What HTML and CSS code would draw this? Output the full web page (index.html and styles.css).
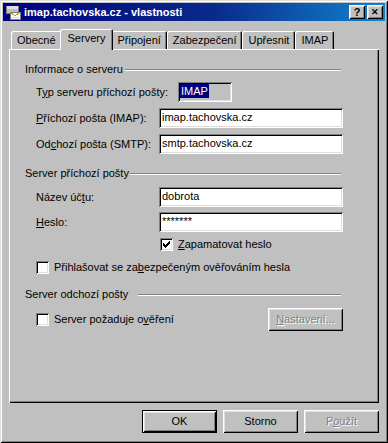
FILE: index.html
```html
<!DOCTYPE html>
<html lang="cs">
<head>
<meta charset="utf-8">
<title>imap.tachovska.cz - vlastnosti</title>
<link rel="stylesheet" href="styles.css">
</head>
<body>
<div class="window">
  <div class="titlebar">
    <svg class="app-icon" width="16" height="16" viewBox="0 0 16 16" shape-rendering="crispEdges">
      <rect x="1" y="2" width="13" height="8" fill="#808080"/>
      <rect x="2" y="2" width="11" height="3" fill="#dfdfdf"/>
      <rect x="2" y="5" width="11" height="4" fill="#c0c0c0"/>
      <rect x="5" y="8" width="10" height="7" fill="#fff" stroke="#808080" stroke-width="1"/>
      <path d="M5.5 8.5 L10 12 L14.5 8.5" fill="none" stroke="#b0a040" stroke-width="1"/>
      <rect x="6" y="13" width="8" height="1" fill="#f0e070"/>
    </svg>
    <span class="title">imap.tachovska.cz - vlastnosti</span>
    <div class="title-buttons">
      <span class="tbtn help">?</span>
      <span class="tbtn close">&#x2715;</span>
    </div>
  </div>

  <div class="body">
    <div class="tabs">
      <div class="tab">Obecné</div>
      <div class="tab active">Servery</div>
      <div class="tab">Připojení</div>
      <div class="tab">Zabezpečení</div>
      <div class="tab">Upřesnit</div>
      <div class="tab">IMAP</div>
    </div>

    <div class="panel">
      <div class="group-title first">
        <span>Informace o serveru</span>
        <span class="etch etch-1"></span>
      </div>

      <div class="row r-first">
        <span class="label">T<u>y</u>p serveru příchozí pošty:</span>
        <div class="field readonly short"><span class="sel">IMAP</span></div>
      </div>
      <div class="row r-6">
        <span class="label"><u>P</u>říchozí pošta (IMAP):</span>
        <div class="field">imap.tachovska.cz</div>
      </div>
      <div class="row r-6">
        <span class="label">Od<u>c</u>hozí pošta (SMTP):</span>
        <div class="field">smtp.tachovska.cz</div>
      </div>

      <div class="group-title g2">
        <span>Server příchozí pošty</span>
        <span class="etch etch-2"></span>
      </div>

      <div class="row r-7">
        <span class="label">Název úč<u>t</u>u:</span>
        <div class="field">dobrota</div>
      </div>
      <div class="row r-5">
        <span class="label"><u>H</u>eslo:</span>
        <div class="field password">*******</div>
      </div>

      <div class="check-row cb-remember">
        <span class="checkbox">
          <svg width="7" height="7" viewBox="0 0 7 7" shape-rendering="crispEdges">
            <rect x="0" y="2" width="1" height="3" fill="#000"/>
            <rect x="1" y="3" width="1" height="3" fill="#000"/>
            <rect x="2" y="4" width="1" height="3" fill="#000"/>
            <rect x="3" y="3" width="1" height="3" fill="#000"/>
            <rect x="4" y="2" width="1" height="3" fill="#000"/>
            <rect x="5" y="1" width="1" height="3" fill="#000"/>
            <rect x="6" y="0" width="1" height="3" fill="#000"/>
          </svg>
        </span>
        <span><u>Z</u>apamatovat heslo</span>
      </div>

      <div class="check-row cb-spa">
        <span class="checkbox"></span>
        <span>Přihlašovat se za<u>b</u>ezpečeným ověřováním hesla</span>
      </div>

      <div class="group-title g3">
        <span>Server odchozí pošty</span>
        <span class="etch etch-3"></span>
      </div>

      <div class="auth-row">
        <div class="check-row">
          <span class="checkbox"></span>
          <span>Server požaduje o<u>v</u>ěření</span>
        </div>
        <div class="btn disabled"><span><u>N</u>astavení...</span></div>
      </div>
    </div>

    <div class="buttons">
      <div class="btn default"><span>OK</span></div>
      <div class="btn"><span>Storno</span></div>
      <div class="btn disabled"><span>P<u>o</u>užít</span></div>
    </div>
  </div>
</div>
</body>
</html>
```

FILE: styles.css
```css
* { box-sizing: border-box; }

html, body {
  margin: 0;
  padding: 0;
}

body {
  background: #c0c0c0;
  font-family: "Liberation Sans", Arial, sans-serif;
  font-size: 11px;
  line-height: 13px;
  color: #000;
}

u { text-decoration: underline; text-underline-offset: 1px; }

.window {
  width: 388px;
  height: 443px;
  padding: 3px;
  background: #c0c0c0;
  display: flex;
  flex-direction: column;
  box-shadow:
    inset 1px 1px #dfdfdf,
    inset -1px -1px #000,
    inset 2px 2px #fff,
    inset -2px -2px #808080;
}

/* ---------- title bar ---------- */
.titlebar {
  height: 18px;
  flex: none;
  display: flex;
  align-items: center;
  padding: 0 2px;
  background: linear-gradient(to right, #000080 0%, #0a2a8a 55%, #1084d0 100%);
  color: #fff;
}

.app-icon {
  flex: none;
  margin-right: 3px;
}

.title {
  flex: 1;
  font-weight: bold;
  font-size: 11px;
  white-space: nowrap;
}

.title-buttons {
  display: flex;
  gap: 2px;
}

.tbtn {
  width: 16px;
  height: 14px;
  display: flex;
  align-items: center;
  justify-content: center;
  background: #c0c0c0;
  color: #000;
  font-weight: bold;
  box-shadow:
    inset 1px 1px #fff,
    inset -1px -1px #000,
    inset 2px 2px #dfdfdf,
    inset -2px -2px #808080;
}

.tbtn.help { font-size: 11px; }
.tbtn.close { font-size: 9px; }

/* ---------- body ---------- */
.body {
  flex: 1;
  display: flex;
  flex-direction: column;
  padding: 0 6px;
}

.tabs {
  margin-top: 8px;
  height: 20px;
  flex: none;
  display: flex;
  align-items: flex-end;
  padding-left: 2px;
}

.tab {
  height: 18px;
  padding: 3px 6px 0 6px;
  white-space: nowrap;
  border-radius: 2px 2px 0 0;
  box-shadow:
    inset 1px 1px #fff,
    inset -1px 0 #000,
    inset -2px 0 #808080;
}

.tab.active {
  position: relative;
  z-index: 1;
  height: 21px;
  margin: 0 -2px -1px -2px;
  padding: 3px 8px 0 8px;
  background: #c0c0c0;
}

.panel {
  height: 354px;
  flex: none;
  display: flex;
  flex-direction: column;
  padding: 14px 0 0 16px;
  box-shadow:
    inset 1px 1px #fff,
    inset -1px -1px #000,
    inset -2px -2px #808080;
}

/* group titles */
.group-title {
  width: 316px;
  height: 13px;
  display: flex;
  justify-content: space-between;
  align-items: center;
  white-space: nowrap;
}

.group-title.g2 { margin-top: 13px; }
.group-title.g3 { margin-top: 14px; }

.etch {
  height: 2px;
  border-top: 1px solid #808080;
  border-bottom: 1px solid #fff;
  margin-top: 1px;
}
.etch-1 { width: 216px; }
.etch-2 { width: 211px; }
.etch-3 { width: 203px; }

/* rows */
.row {
  display: flex;
  align-items: center;
  height: 20px;
  margin-left: 11px;
}
.r-first { margin-top: 6px; }
.r-6 { margin-top: 6px; }
.r-7 { margin-top: 7px; }
.r-5 { margin-top: 5px; }

.label {
  width: 123px;
  flex: none;
  white-space: nowrap;
}

.field {
  width: 184px;
  height: 20px;
  background: #fff;
  padding: 3px 3px 0 3px;
  white-space: nowrap;
  box-shadow:
    inset 1px 1px #808080,
    inset -1px -1px #fff,
    inset 2px 2px #000,
    inset -2px -2px #dfdfdf;
}

.field.readonly {
  background: #c0c0c0;
}

.field.short {
  width: 54px;
  margin-left: 19px;
  padding-left: 2px;
  padding-top: 2px;
}

.sel {
  display: inline-block;
  background: #000080;
  color: #fff;
  padding: 1px 1px 0 1px;
  line-height: 13px;
}

.field.password {
  font-size: 11px;
  letter-spacing: 0;
}

/* checkboxes */
.check-row {
  display: flex;
  align-items: center;
  gap: 5px;
  height: 13px;
  white-space: nowrap;
}

.cb-remember { margin: 6px 0 0 135px; }
.cb-spa { margin: 10px 0 0 11px; }

.checkbox {
  width: 13px;
  height: 13px;
  flex: none;
  display: flex;
  align-items: center;
  justify-content: center;
  background: #fff;
  box-shadow:
    inset 1px 1px #808080,
    inset -1px -1px #fff,
    inset 2px 2px #000,
    inset -2px -2px #dfdfdf;
}

.auth-row {
  margin: 7px 0 0 11px;
  width: 307px;
  height: 23px;
  display: flex;
  align-items: center;
  justify-content: space-between;
}

/* buttons */
.btn {
  width: 75px;
  height: 23px;
  flex: none;
  display: flex;
  align-items: center;
  justify-content: center;
  background: #c0c0c0;
  box-shadow:
    inset 1px 1px #fff,
    inset -1px -1px #000,
    inset 2px 2px #dfdfdf,
    inset -2px -2px #808080;
}

.btn.default {
  border: 1px solid #000;
  box-shadow:
    inset 1px 1px #fff,
    inset -1px -1px #000,
    inset 2px 2px #dfdfdf,
    inset -2px -2px #808080;
}

.btn.disabled {
  color: #808080;
  text-shadow: 1px 1px 0 #fff;
}

.buttons {
  margin-top: 7px;
  display: flex;
  justify-content: flex-end;
  gap: 6px;
}
```
